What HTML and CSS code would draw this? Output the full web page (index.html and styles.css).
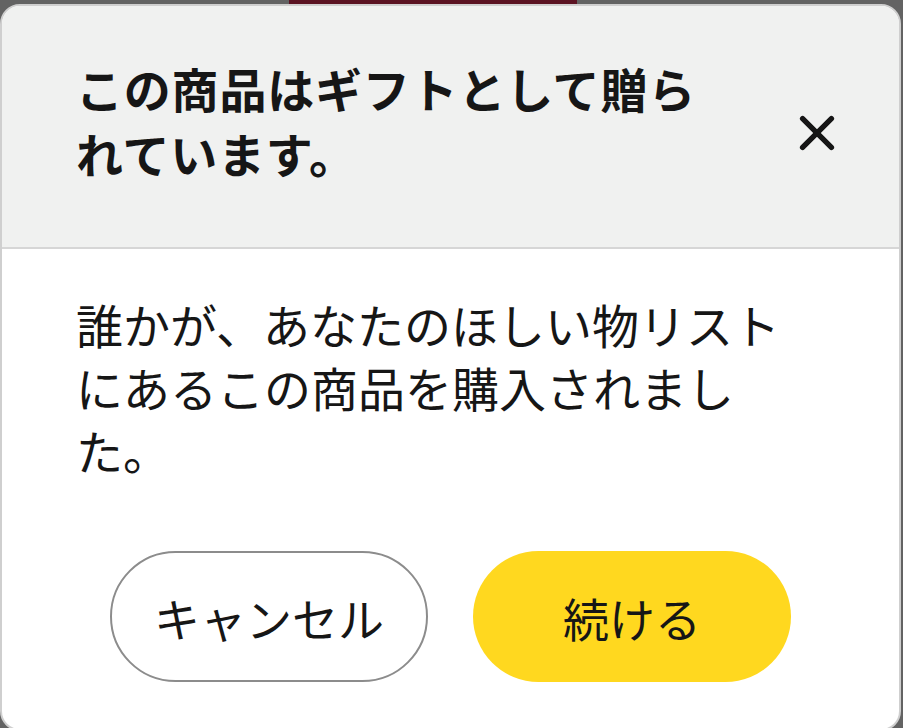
FILE: index.html
```html
<!DOCTYPE html>
<html lang="ja">
<head>
  <meta charset="UTF-8">
  <meta name="viewport" content="width=device-width, initial-scale=1.0">
  <title>ギフト</title>
  <link rel="stylesheet" href="styles.css">
</head>
<body>
  <div class="backdrop">
    <div class="peek"></div>
    <div class="dialog">
      <header class="dialog_head">
        <div class="title">この商品はギフトとして贈られています。</div>
        <button class="close" aria-label="閉じる">
          <svg width="40" height="40" viewBox="0 0 40 40">
            <path d="M4 4 L36 36 M36 4 L4 36" stroke="#161616" stroke-width="6" stroke-linecap="round" fill="none"/>
          </svg>
        </button>
      </header>
      <div class="dialog_body">
        <p class="message">誰かが、あなたのほしい物リストにあるこの商品を購入されました。</p>
        <div class="actions">
          <button class="btn btn_cancel">キャンセル</button>
          <button class="btn btn_ok">続ける</button>
        </div>
      </div>
    </div>
  </div>
</body>
</html>
```

FILE: styles.css
```css
* {
  box-sizing: border-box;
}
html, body, div, header, p {
  margin: 0;
  padding: 0;
}
body {
  background-color: #636363;
  font-family: "Noto Sans CJK JP", "Noto Sans", sans-serif;
  color: #161616;
  overflow: hidden;
}
.backdrop {
  position: relative;
  width: 903px;
  height: 728px;
  padding: 4px 2px 0 0;
}
.peek {
  position: absolute;
  top: 0;
  left: 289px;
  width: 288px;
  height: 6px;
  background-color: #5b1322;
}
.dialog {
  position: relative;
  width: 901px;
  height: 727px;
  border: 2px solid #cfcfcf;
  border-radius: 20px;
  overflow: hidden;
  background-color: #fff;
}
.dialog_head {
  display: flex;
  align-items: center;
  justify-content: space-between;
  height: 243px;
  padding: 0 64px 0 74px;
  background-color: #f0f1f0;
  border-bottom: 2px solid #d6d6d6;
}
.title {
  width: 650px;
  font-size: 47px;
  letter-spacing: 0.8px;
  font-weight: 700;
  line-height: 65px;
  padding-bottom: 14px;
}
.close {
  display: flex;
  padding: 0;
  border: none;
  background: none;
  margin-top: 12px;
}
.close svg {
  width: 36px;
  height: 36px;
}
.dialog_body {
  padding: 43px 74px 0;
}
.message {
  font-size: 47px;
  line-height: 63px;
}
.actions {
  display: flex;
  justify-content: center;
  gap: 45px;
  margin-top: 70px;
}
.btn {
  width: 318px;
  height: 131px;
  border-radius: 66px;
  font-family: "Noto Sans CJK JP", "Noto Sans", sans-serif;
  font-size: 46px;
  color: #161616;
  padding: 0;
}
.btn_cancel {
  background-color: #fff;
  border: 2px solid #8c8c8c;
}
.btn_ok {
  background-color: #ffd81f;
  border: none;
}
```
